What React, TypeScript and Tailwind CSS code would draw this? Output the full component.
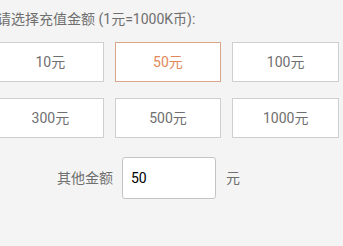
import { useState } from 'react';

const amounts = [10, 50, 100, 300, 500, 1000];

export default function App() {
  const [selected, setSelected] = useState(50);
  const [other, setOther] = useState('50');

  return (
    <div
      className="h-[246px] w-[343px] overflow-hidden bg-[#f4f4f4] text-[#6f6f6f]"
      style={{ fontFamily: 'Roboto, "Noto Sans CJK SC", sans-serif' }}
    >
      <div className="-ml-[3px] pt-[9px]">
        <p className="text-[14px] leading-[20px]">请选择充值金额 (1元=1000K币):</p>

        <div className="mt-[13px] grid w-[342px] grid-cols-3 gap-x-[11px] gap-y-[16px]">
          {amounts.map((a) => (
            <button
              key={a}
              onClick={() => setSelected(a)}
              className={
                a === selected
                  ? 'h-[40px] border border-[#dba589] bg-white text-[14px] text-[#e2885a]'
                  : 'h-[40px] border border-[#cfcfcf] bg-white text-[14px] text-[#6f6f6f]'
              }
            >
              {a}元
            </button>
          ))}
        </div>
      </div>

      <div className="mt-[19px] flex items-center">
        <span className="ml-[57px] text-[14px]">其他金额</span>
        <input
          value={other}
          onChange={(e) => setOther(e.target.value)}
          className="ml-[9px] h-[42px] w-[94px] rounded-[3px] border border-[#c4c4c4] bg-white px-[8px] text-[14px] text-black outline-none"
        />
        <span className="ml-[10px] text-[14px]">元</span>
      </div>
    </div>
  );
}
